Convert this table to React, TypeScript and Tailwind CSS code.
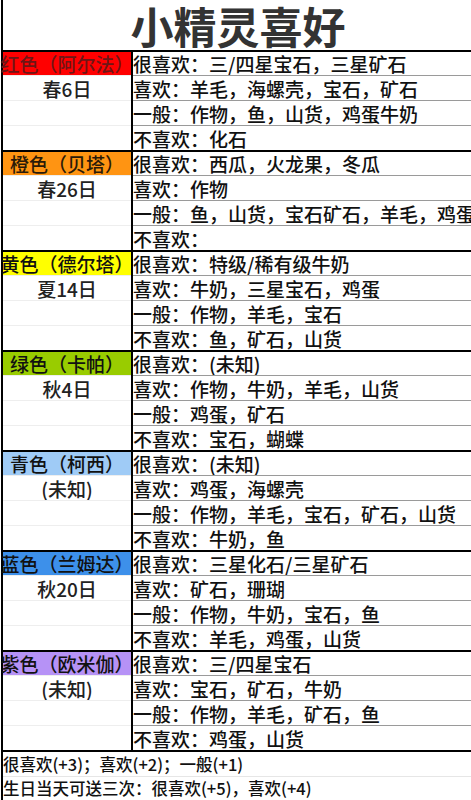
const groups = [
  {
    name: "红色（阿尔法）",
    bg: "bg-[#ff0000]",
    text: "text-[#6e1616]",
    date: "春6日",
    likes: ["很喜欢：三/四星宝石，三星矿石", "喜欢：羊毛，海螺壳，宝石，矿石", "一般：作物，鱼，山货，鸡蛋牛奶", "不喜欢：化石"],
  },
  {
    name: "橙色（贝塔）",
    bg: "bg-[#ff9412]",
    text: "text-[#2a1a08]",
    date: "春26日",
    likes: ["很喜欢：西瓜，火龙果，冬瓜", "喜欢：作物", "一般：鱼，山货，宝石矿石，羊毛，鸡蛋", "不喜欢："],
  },
  {
    name: "黄色（德尔塔）",
    bg: "bg-[#ffff00]",
    text: "text-[#111]",
    date: "夏14日",
    likes: ["很喜欢：特级/稀有级牛奶", "喜欢：牛奶，三星宝石，鸡蛋", "一般：作物，羊毛，宝石", "不喜欢：鱼，矿石，山货"],
  },
  {
    name: "绿色（卡帕）",
    bg: "bg-[#99cc00]",
    text: "text-[#111]",
    date: "秋4日",
    likes: ["很喜欢：(未知)", "喜欢：作物，牛奶，羊毛，山货", "一般：鸡蛋，矿石", "不喜欢：宝石，蝴蝶"],
  },
  {
    name: "青色（柯西）",
    bg: "bg-[#9fcbf6]",
    text: "text-[#111]",
    date: "(未知)",
    likes: ["很喜欢：(未知)", "喜欢：鸡蛋，海螺壳", "一般：作物，羊毛，宝石，矿石，山货", "不喜欢：牛奶，鱼"],
  },
  {
    name: "蓝色（兰姆达）",
    bg: "bg-[#3d90ea]",
    text: "text-[#111]",
    date: "秋20日",
    likes: ["很喜欢：三星化石/三星矿石", "喜欢：矿石，珊瑚", "一般：作物，牛奶，宝石，鱼", "不喜欢：羊毛，鸡蛋，山货"],
  },
  {
    name: "紫色（欧米伽）",
    bg: "bg-[#b692f6]",
    text: "text-[#111]",
    date: "(未知)",
    likes: ["很喜欢：三/四星宝石", "喜欢：宝石，矿石，牛奶", "一般：作物，羊毛，矿石，鱼", "不喜欢：鸡蛋，山货"],
  },
];

const font = "font-['Noto_Sans_CJK_SC','Noto_Sans',sans-serif]";

export default function App() {
  return (
    <div className={`w-[471px] h-[800px] overflow-hidden bg-white pl-[1px] ${font}`}>
      <div className="h-full border-l-2 border-black">
        <div className="h-[50px] flex items-center justify-center pl-[2px]">
          <span className="text-[43px] font-bold leading-none text-[#333]">小精灵喜好</span>
        </div>

        {groups.map((g) => (
          <div key={g.name} className="flex border-t-2 border-black">
            <div className="w-[130px] shrink-0 border-r-2 border-black flex flex-col">
              <div className={`h-[23px] flex items-center justify-center whitespace-nowrap text-[19px] font-medium leading-none ${g.bg} ${g.text}`}>
                {g.name}
              </div>
              <div className="h-[25px] border-t border-[#eeeeee] flex items-center justify-center text-[19px] font-medium leading-none text-[#222]">
                {g.date}
              </div>
              <div className="h-[25px] border-t border-[#eeeeee]" />
              <div className="h-[25px] border-t border-[#eeeeee]" />
            </div>
            <div className="flex-1 min-w-0 flex flex-col text-[19px] font-medium leading-none text-[#111]">
              {g.likes.map((t, i) => (
                <div
                  key={t}
                  className={`${i === 0 ? "h-[23px]" : "h-[25px] border-t border-[#9a9a9a]"} flex items-center whitespace-nowrap`}
                >
                  {t}
                </div>
              ))}
            </div>
          </div>
        ))}

        <div className="border-t-2 border-black text-[16.5px] font-medium leading-none text-[#111]">
          <div className="h-[24px] flex items-center whitespace-nowrap">很喜欢(+3)；喜欢(+2)；一般(+1)</div>
          <div className="h-[24px] border-t border-[#e6e6e6] flex items-center whitespace-nowrap">
            生日当天可送三次：很喜欢(+5)，喜欢(+4)
          </div>
        </div>
      </div>
    </div>
  );
}
